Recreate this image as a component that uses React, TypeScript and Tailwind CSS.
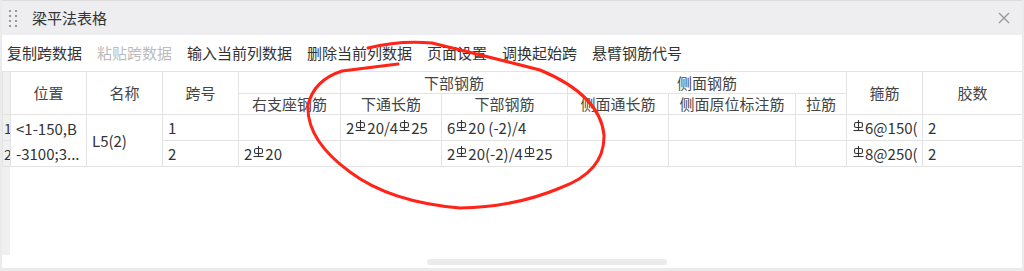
import React from 'react';

const font = { fontFamily: '"Noto Sans CJK SC", "Noto Sans", sans-serif' };

// HRB400 钢筋符号
const Rebar: React.FC = () => (
  <svg width="11" height="12" viewBox="0 0 11 12" className="inline-block align-[2px] mx-[1px]" fill="none" stroke="#333" strokeWidth="1.1">
    <line x1="5.5" y1="0" x2="5.5" y2="10" />
    <rect x="1.5" y="2.5" width="8" height="5" rx="1.8" />
    <line x1="0.5" y1="10.5" x2="10.5" y2="10.5" />
  </svg>
);

const rb = (s: string) =>
  s.split('Φ').map((part, i) => (
    <React.Fragment key={i}>
      {i > 0 && <Rebar />}
      {part}
    </React.Fragment>
  ));

const tools = [
  { label: '复制跨数据' },
  { label: '粘贴跨数据', disabled: true },
  { label: '输入当前列数据' },
  { label: '删除当前列数据' },
  { label: '页面设置' },
  { label: '调换起始跨' },
  { label: '悬臂钢筋代号' },
];

const widths = [8, 76, 76, 76, 102, 101, 126, 101, 127, 51, 76, 100];

const th = 'border border-[#e3e3e3] font-normal text-[#444] text-center p-0 leading-[18px]';
const td = 'border border-[#e3e3e3] text-[#333] px-[5px] py-0 whitespace-nowrap overflow-hidden text-left leading-[20px]';
const num = 'border border-[#e3e3e3] bg-[#f0f0f0] text-[#333] text-[14px] text-left pl-[1px] p-0 leading-[18px] overflow-hidden';

export default function App() {
  return (
    <div className="relative w-[1024px] h-[271px] bg-white flex flex-col border-x-2 border-b-[3px] border-[#ebebeb] overflow-hidden" style={font}>
      {/* 标题栏 */}
      <div className="h-[35px] shrink-0 bg-[#eeeef0] border-t border-[#dcdcdc] flex items-center pl-[7px] pr-[12px]">
        <div className="grid grid-cols-2 gap-x-[4px] gap-y-[3px] w-[7px]">
          {Array.from({ length: 8 }).map((_, i) => (
            <span key={i} className="w-[2px] h-[2px] bg-[#999]" />
          ))}
        </div>
        <span className="ml-[16px] text-[15px] text-[#333]">梁平法表格</span>
        <svg className="ml-auto" width="12" height="12" viewBox="0 0 12 12" stroke="#9a9a9a" strokeWidth="1.4">
          <line x1="1" y1="1" x2="11" y2="11" />
          <line x1="11" y1="1" x2="1" y2="11" />
        </svg>
      </div>

      {/* 工具栏 */}
      <div className="h-[36px] shrink-0 flex items-center gap-[15px] pl-[5px] text-[15px]">
        {tools.map((t) => (
          <span key={t.label} className={t.disabled ? 'text-[#bcbcbc]' : 'text-[#333]'}>{t.label}</span>
        ))}
      </div>

      {/* 表格 */}
      <table className="table-fixed border-collapse text-[15px] w-[1020px]">
        <colgroup>
          {widths.map((w, i) => (
            <col key={i} style={{ width: w }} />
          ))}
        </colgroup>
        <thead>
          <tr className="h-[22px]">
            <th rowSpan={2} className={num} />
            <th rowSpan={2} className={th}>位置</th>
            <th rowSpan={2} className={th}>名称</th>
            <th rowSpan={2} className={th}>跨号</th>
            <th className={th} />
            <th colSpan={2} className={th}>下部钢筋</th>
            <th colSpan={3} className={th}>侧面钢筋</th>
            <th rowSpan={2} className={th}>箍筋</th>
            <th rowSpan={2} className={th}>胶数</th>
          </tr>
          <tr className="h-[21px]">
            <th className={th}>右支座钢筋</th>
            <th className={th}>下通长筋</th>
            <th className={th}>下部钢筋</th>
            <th className={th}>侧面通长筋</th>
            <th className={th}>侧面原位标注筋</th>
            <th className={th}>拉筋</th>
          </tr>
        </thead>
        <tbody>
          <tr className="h-[26px]">
            <td className={num}>1</td>
            <td rowSpan={2} className={td + ' !leading-[25px]'}>
              &lt;1-150,B
              <br />
              -3100;3...
            </td>
            <td rowSpan={2} className={td}>L5(2)</td>
            <td className={td}>1</td>
            <td className={td} />
            <td className={td}>{rb('2Φ20/4Φ25')}</td>
            <td className={td}>{rb('6Φ20 (-2)/4')}</td>
            <td className={td} />
            <td className={td} />
            <td className={td} />
            <td className={td}>{rb('Φ6@150(')}</td>
            <td className={td}>2</td>
          </tr>
          <tr className="h-[26px]">
            <td className={num}>2</td>
            <td className={td}>2</td>
            <td className={td}>{rb('2Φ20')}</td>
            <td className={td} />
            <td className={td}>{rb('2Φ20(-2)/4Φ25')}</td>
            <td className={td} />
            <td className={td} />
            <td className={td} />
            <td className={td}>{rb('Φ8@250(')}</td>
            <td className={td}>2</td>
          </tr>
        </tbody>
      </table>

      {/* 表格空白区 */}
      <div className="flex-1 flex flex-col">
        <div className="w-[8px] h-[88px] bg-[#f0f0f0]" />
        <div className="flex-1 flex items-center">
          <div className="ml-[425px] w-[240px] h-[6px] rounded-full bg-[#ebebeb]" />
        </div>
      </div>

      {/* 红色手绘圈注 */}
      <svg className="absolute left-[-2px] top-0 pointer-events-none" width="1024" height="271" fill="none">
        <path
          d="M 368 48 Q 400 40 432 43 Q 485 56 540 70 Q 600 95 604 135 Q 605 172 560 188 Q 515 207 460 208 Q 390 202 350 172 Q 306 140 308 105 Q 314 80 342 71 L 398 64"
          stroke="#ff2318"
          strokeWidth="3"
          strokeLinecap="round"
          strokeLinejoin="round"
        />
      </svg>
    </div>
  );
}
